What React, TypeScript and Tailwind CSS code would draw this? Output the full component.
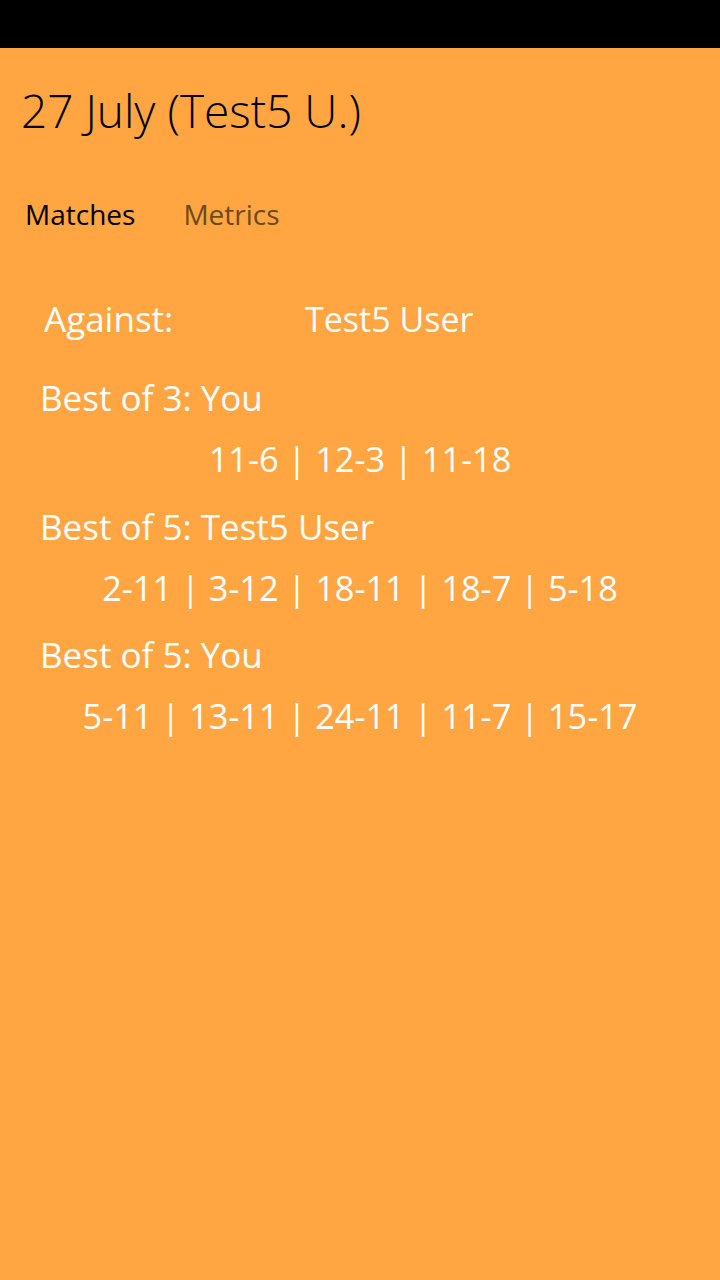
import React from "react";

export default function App() {
  const rows = [
    { label: "Best of 3: You", score: "11-6 | 12-3 | 11-18" },
    { label: "Best of 5: Test5 User", score: "2-11 | 3-12 | 18-11 | 18-7 | 5-18" },
    { label: "Best of 5: You", score: "5-11 | 13-11 | 24-11 | 11-7 | 15-17" },
  ];
  return (
    <div className="w-[720px] h-[1280px] bg-[#ffa643] flex flex-col font-['Open_Sans',sans-serif]">
      <div className="h-[48px] bg-black shrink-0" />
      <div className="pl-[21px] pt-[30px] text-[46px] leading-[64px] font-light text-black">
        27 July (Test5 U.)
      </div>
      <div className="flex pl-[25px] gap-[48px] pt-[54px] text-[28px] leading-[36px]">
        <span className="text-black">Matches</span>
        <span className="text-[#6b4a1e]">Metrics</span>
      </div>
      <div className="flex pl-[44px] pt-[63px] text-[35px] leading-[48px] text-white">
        <span className="w-[261px]">Against:</span>
        <span className="text-[34px]">Test5 User</span>
      </div>
      <div className="flex flex-col pt-[24px] text-[35px] text-white">
        {rows.map((r) => (
          <React.Fragment key={r.label}>
            <div className="pl-[40px] leading-[61px]">{r.label}</div>
            <div className="text-center text-[34.3px] leading-[61px] mb-[6.5px]">{r.score}</div>
          </React.Fragment>
        ))}
      </div>
    </div>
  );
}
